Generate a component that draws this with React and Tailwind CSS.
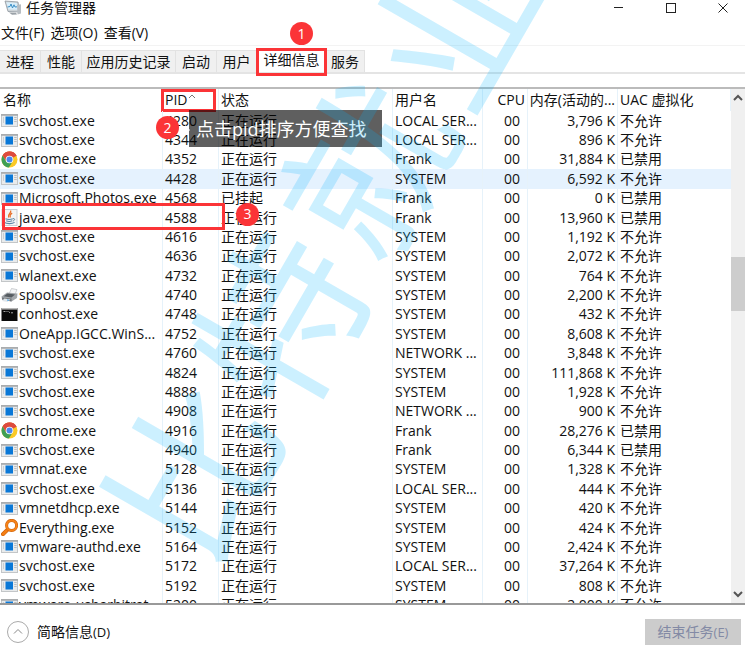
import React from 'react';

const rows = [
  ['app', 'svchost.exe', '4280', '正在运行', 'LOCAL SER...', '3,796 K', '不允许'],
  ['app', 'svchost.exe', '4344', '正在运行', 'LOCAL SER...', '896 K', '不允许'],
  ['chrome', 'chrome.exe', '4352', '正在运行', 'Frank', '31,884 K', '已禁用'],
  ['app', 'svchost.exe', '4428', '正在运行', 'SYSTEM', '6,592 K', '不允许'],
  ['app', 'Microsoft.Photos.exe', '4568', '已挂起', 'Frank', '0 K', '已禁用'],
  ['java', 'java.exe', '4588', '正在运行', 'Frank', '13,960 K', '已禁用'],
  ['app', 'svchost.exe', '4616', '正在运行', 'SYSTEM', '1,192 K', '不允许'],
  ['app', 'svchost.exe', '4636', '正在运行', 'SYSTEM', '2,072 K', '不允许'],
  ['app', 'wlanext.exe', '4732', '正在运行', 'SYSTEM', '764 K', '不允许'],
  ['printer', 'spoolsv.exe', '4740', '正在运行', 'SYSTEM', '2,200 K', '不允许'],
  ['console', 'conhost.exe', '4748', '正在运行', 'SYSTEM', '432 K', '不允许'],
  ['app', 'OneApp.IGCC.WinS...', '4752', '正在运行', 'SYSTEM', '8,608 K', '不允许'],
  ['app', 'svchost.exe', '4760', '正在运行', 'NETWORK ...', '3,848 K', '不允许'],
  ['app', 'svchost.exe', '4824', '正在运行', 'SYSTEM', '111,868 K', '不允许'],
  ['app', 'svchost.exe', '4888', '正在运行', 'SYSTEM', '1,928 K', '不允许'],
  ['app', 'svchost.exe', '4908', '正在运行', 'NETWORK ...', '900 K', '不允许'],
  ['chrome', 'chrome.exe', '4916', '正在运行', 'Frank', '28,276 K', '已禁用'],
  ['app', 'svchost.exe', '4940', '正在运行', 'Frank', '6,344 K', '已禁用'],
  ['app', 'vmnat.exe', '5128', '正在运行', 'SYSTEM', '1,328 K', '不允许'],
  ['app', 'svchost.exe', '5136', '正在运行', 'LOCAL SER...', '444 K', '不允许'],
  ['app', 'vmnetdhcp.exe', '5144', '正在运行', 'SYSTEM', '420 K', '不允许'],
  ['search', 'Everything.exe', '5152', '正在运行', 'SYSTEM', '424 K', '不允许'],
  ['app', 'vmware-authd.exe', '5164', '正在运行', 'SYSTEM', '2,424 K', '不允许'],
  ['app', 'svchost.exe', '5172', '正在运行', 'LOCAL SER...', '37,264 K', '不允许'],
  ['app', 'svchost.exe', '5192', '正在运行', 'SYSTEM', '808 K', '不允许'],
  ['app', 'vmware-usbarbitrat...', '5200', '正在运行', 'SYSTEM', '2,000 K', '不允许'],
];

function ProcessIcon({ kind }) {
  const common = { width: 17, height: 17, viewBox: '0 0 17 17', className: 'shrink-0', 'aria-hidden': true };
  if (kind === 'chrome') {
    return (
      <svg {...common}>
        <circle cx="8.5" cy="8.5" r="8" fill="#fbc926" />
        <path d="M8.5 8.5 L1.6 4.5 A8 8 0 0 1 15.6 4.8 Z" fill="#dd4b3e" />
        <path d="M8.5 4.8 H15.6 A8 8 0 0 0 1.6 4.5 L5.2 10.4 Z" fill="#dd4b3e" />
        <path d="M1.6 4.5 A8 8 0 0 0 7.9 16.5 L11.6 10.5 L8.5 12 L5.2 10.4 Z" fill="#3f9f55" />
        <circle cx="8.5" cy="8.5" r="3.8" fill="#fff" />
        <circle cx="8.5" cy="8.5" r="3" fill="#4c86ee" />
      </svg>
    );
  }
  if (kind === 'java') {
    return (
      <svg {...common}>
        <rect x="1" y="0.5" width="15" height="16" fill="#f4f4f4" stroke="#c9cdd2" />
        <path d="M9.6 1.5 C11 4 6 5 7.6 8.6 M11.2 4.2 C8.6 5.4 8.6 6.6 9.4 8.6" fill="none" stroke="#e8702a" strokeWidth="1.3" />
        <path d="M4.5 9.8 C7 10.8 10 10.6 11.8 9.8 M5.2 11.8 C7 12.6 9.6 12.5 11.2 11.8 M3.4 13.6 C6 15 11 15 13.6 13.4" fill="none" stroke="#5e86a6" strokeWidth="1.1" />
        <path d="M12 9.6 C14.4 9.2 14 11.6 11.8 12" fill="none" stroke="#5e86a6" />
      </svg>
    );
  }
  if (kind === 'printer') {
    return (
      <svg {...common}>
        <path d="M8 7 L10.5 1.5 L16 2.6 L13.5 8.5 Z" fill="#f4f5f6" stroke="#b9bdc1" strokeWidth="0.7" />
        <path d="M0.5 9.5 L6 5.5 L16.5 6.5 L16 11 L10.5 14.5 L1 12.5 Z" fill="#a4a8ac" />
        <path d="M2.6 9.3 L6.5 6.6 L14 7.4 L10.5 10.4 Z" fill="#555b60" />
        <path d="M1 10.4 L10.6 11.6 L10.5 14.5 L1 12.5 Z" fill="#74797d" />
        <path d="M3.4 11.6 L9.4 12.4 L6.6 15 L1 13.9 Z" fill="#dfe5ea" />
        <path d="M6 13 l2 .3" stroke="#3b9ade" />
      </svg>
    );
  }
  if (kind === 'console') {
    return (
      <svg {...common}>
        <rect x="0.5" y="2" width="16" height="13" fill="#0b0b0b" />
        <rect x="0.5" y="2" width="16" height="1.6" fill="#b8b8b8" />
        <path d="M2.5 5.5 h2 M5.5 5.5 h1 M7.5 5.5 l1.5 1.3 M10 6.8 h2" stroke="#cfcfcf" strokeWidth="0.8" />
      </svg>
    );
  }
  if (kind === 'search') {
    return (
      <svg {...common}>
        <path d="M6.6 10.6 L2 15.2" stroke="#c95f0a" strokeWidth="4" strokeLinecap="round" />
        <path d="M6.6 10.6 L2 15.2" stroke="#f47e14" strokeWidth="2.8" strokeLinecap="round" />
        <circle cx="10.6" cy="6.4" r="5" fill="#fff" stroke="#c95f0a" strokeWidth="3" />
        <circle cx="10.6" cy="6.4" r="5" fill="none" stroke="#f88417" strokeWidth="2" />
      </svg>
    );
  }
  return (
    <svg {...common}>
      <rect x="0.5" y="2.5" width="16" height="12" fill="#e9ebec" stroke="#c3c6c8" />
      <rect x="0" y="2" width="17" height="1.8" fill="#a9acae" />
      <path d="M2 6 h1 M2 8 h1 M2 10 h1" stroke="#a9b3bb" />
      <rect x="4.5" y="4.5" width="7.5" height="8" fill="#0a78d7" />
      <path d="M13.2 5.5 h2.5 M13.2 7.5 h2.5 M13.2 9.5 h2.5" stroke="#bcbfc1" />
    </svg>
  );
}

function TaskManagerIcon() {
  return (
    <svg width="18" height="16" viewBox="0 0 18 16" className="shrink-0" aria-hidden="true">
      <path d="M1 1 L14 2 L15.5 12 L4 11.5 Z" fill="#cdd3d7" stroke="#8e979e" strokeWidth="0.8" />
      <path d="M2.3 2.2 L13 3 L14 9.8 L4.4 9.4 Z" fill="#d8eefa" />
      <path d="M3.5 7 L6 6.5 L7 4 L8.5 8 L10 4.8 L11 7 L13 6.8" fill="none" stroke="#3b8fc6" />
      <path d="M13 5 L17 4.2 V13.5 L13.5 14.6 Z" fill="#b7bdc2" />
      <path d="M5 12.5 L12 12.8 L13 14.6 L8 14.8 Z" fill="#9aa1a7" />
    </svg>
  );
}

function Badge({ children, place }) {
  return (
    <span className={`absolute z-20 flex h-[23px] w-[23px] items-center justify-center rounded-full bg-[#fb3437] text-[14px] leading-none text-white ${place}`}>
      {children}
    </span>
  );
}

const tabs = [
  ['进程', 'w-[41px]'],
  ['性能', 'w-[41px]'],
  ['应用历史记录', 'w-[94px]'],
  ['启动', 'w-[41px]'],
  ['用户', 'w-[40px]'],
  ['详细信息', 'w-[69px]'],
  ['服务', 'w-[39px]'],
];

const cell = 'border-r border-[#e6f2fa] p-0';

export default function App() {
  return (
    <div className="relative flex h-screen flex-col overflow-hidden bg-white font-['Open_Sans','Noto_Sans_CJK_SC',sans-serif] text-[14px] leading-[18px] text-[#111]">
      <header className="flex h-4 items-center gap-1 pl-1">
        <TaskManagerIcon />
        <h1 className="flex-1 leading-4">任务管理器</h1>
        <div className="flex gap-10 pr-4">
          <button aria-label="最小化" className="flex h-3 w-3 items-center justify-center">
            <svg width="10" height="10" viewBox="0 0 10 10"><path d="M0 4.5 H9" stroke="#222" /></svg>
          </button>
          <button aria-label="最大化" className="flex h-3 w-3 items-center justify-center">
            <svg width="10" height="10" viewBox="0 0 10 10"><rect x="0.5" y="0.5" width="9" height="9" fill="none" stroke="#222" /></svg>
          </button>
          <button aria-label="关闭" className="flex h-3 w-3 items-center justify-center">
            <svg width="10" height="10" viewBox="0 0 10 10"><path d="M0.5 0.5 L9.5 9.5 M9.5 0.5 L0.5 9.5" stroke="#222" /></svg>
          </button>
        </div>
      </header>
      <nav className="mt-2 flex h-[22px] items-start gap-[6px] border-b border-[#f3f3f3] pl-px">
        <button>文件(F)</button>
        <button>选项(O)</button>
        <button>查看(V)</button>
      </nav>
      <div role="tablist" className="mt-1 flex h-6 border-b-2 border-[#e4e4e4]">
        {tabs.map(([name, width]) =>
          name === '详细信息' ? (
            <div key={name} className={`relative ${width}`}>
              <button role="tab" aria-selected="true" className="h-[22px] w-full whitespace-nowrap bg-white pb-[2px] text-center">{name}</button>
              <span className="absolute -inset-x-px -top-[2px] h-[28px] border-[3px] border-[#fb3437]" />
              <Badge place="-top-[28px] left-[33px]">1</Badge>
            </div>
          ) : (
            <button key={name} role="tab" aria-selected="false" className={`${width} whitespace-nowrap border-r border-t border-[#e2e2e2] bg-[#f0f0f0] text-center`}>{name}</button>
          )
        )}
      </div>
      <main className="mt-[13px] flex min-h-0 flex-1 border-b-2 border-t-2 border-b-[#999] border-t-[#bbb]">
        <div className="min-w-0 flex-1 overflow-hidden">
          <table className="h-[526px] w-full table-fixed border-separate border-spacing-0 whitespace-nowrap text-left">
            <thead>
              <tr className="h-[22px]">
                <th className={`${cell} w-[163px] pl-[3px] font-normal`}>名称</th>
                <th className={`${cell} relative w-[56px] pl-[2px] font-normal`}>
                  <button className="flex">
                    PID
                    <svg width="8" height="8" viewBox="0 0 8 8" aria-hidden="true"><path d="M1 7 L4 4 L7 7" fill="none" stroke="#777" /></svg>
                  </button>
                  <span className="absolute -left-[2px] top-0 h-[23px] w-[55px] border-[3px] border-[#fb3437]" />
                  <Badge place="top-[27px] -left-[7px]">2</Badge>
                  <span className="absolute left-[26px] top-[21px] z-10 flex h-[37px] w-[193px] items-center bg-[#000000a0] pl-[7px] text-[18px] leading-6 text-white">
                    点击pid排序方便查找
                    <span className="absolute -left-1 top-[15px] border-y-[5px] border-l-[5px] border-y-transparent border-l-white" />
                  </span>
                </th>
                <th className={`${cell} w-[174px] pl-[2px] font-normal`}>状态</th>
                <th className={`${cell} w-[90px] pl-[2px] font-normal`}>用户名</th>
                <th className={`${cell} w-[45px] pr-[2px] text-right font-normal`}>CPU</th>
                <th className={`${cell} w-[90px] pr-[2px] text-right font-normal`}>内存(活动的...</th>
                <th className={`${cell} pl-[2px] font-normal`}>UAC 虚拟化</th>
              </tr>
            </thead>
            <tbody>
              {rows.map(([icon, name, pid, status, user, memory, uac]) => (
                <tr key={pid} className={pid === '4428' ? 'bg-[#e5f2fe]' : ''}>
                  <td className={`${cell} relative pl-px`}>
                    <span className="flex items-center gap-px">
                      <ProcessIcon kind={icon} />
                      {name}
                    </span>
                    {icon === 'java' && (
                      <>
                        <span className="absolute -top-[5px] left-[2px] z-10 h-[27px] w-[223px] border-[3px] border-[#fb3437]" />
                        <Badge place="-top-[5px] left-[236px]">3</Badge>
                      </>
                    )}
                  </td>
                  <td className={`${cell} pl-[2px]`}>{pid}</td>
                  <td className={`${cell} pl-[2px]`}>{status}</td>
                  <td className={`${cell} pl-[2px]`}>{user}</td>
                  <td className={`${cell} pr-[7px] text-right`}>00</td>
                  <td className={`${cell} pr-[2px] text-right`}>{memory}</td>
                  <td className="p-0 pl-[2px]">{uac}</td>
                </tr>
              ))}
            </tbody>
          </table>
        </div>
        <div className="flex w-[14px] flex-col bg-[#f0f0f0]">
          <button aria-label="向上滚动" className="flex h-[18px] items-center justify-center">
            <svg width="10" height="8" viewBox="0 0 10 8"><path d="M1 6 L5 2 L9 6" fill="none" stroke="#555" strokeWidth="2" /></svg>
          </button>
          <div className="flex flex-1 flex-col">
            <div className="grow-[150]" />
            <div className="grow-[54] bg-[#cdcdcd]" />
            <div className="grow-[275]" />
          </div>
          <button aria-label="向下滚动" className="flex h-[18px] items-center justify-center">
            <svg width="10" height="8" viewBox="0 0 10 8"><path d="M1 2 L5 6 L9 2" fill="none" stroke="#555" strokeWidth="2" /></svg>
          </button>
        </div>
      </main>
      <footer className="flex h-[51px] items-center justify-between pl-[7px] pr-1 pt-[2px]">
        <button className="flex items-center gap-2">
          <svg width="22" height="22" viewBox="0 0 22 22" aria-hidden="true">
            <circle cx="11" cy="11" r="10.5" fill="#fff" stroke="#aaa" />
            <path d="M7 12.5 L11 8.5 L15 12.5" fill="none" stroke="#888" />
          </svg>
          <span>简略信息<span className="text-[13px]">(D)</span></span>
        </button>
        <button disabled className="h-[26px] w-24 bg-[#cccccc] text-[#838aa5]">结束任务<span className="text-[13px]">(E)</span></button>
      </footer>
      <div aria-hidden="true" className="pointer-events-none absolute inset-0 z-30 overflow-hidden">
        <div className="absolute -left-[20px] top-[161px] flex -rotate-60 gap-2 whitespace-nowrap text-[166px] leading-[166px] text-[#00b2ff33]">
          <span>比</span>
          <span>特</span>
          <span>就</span>
          <span>业</span>
        </div>
      </div>
    </div>
  );
}
